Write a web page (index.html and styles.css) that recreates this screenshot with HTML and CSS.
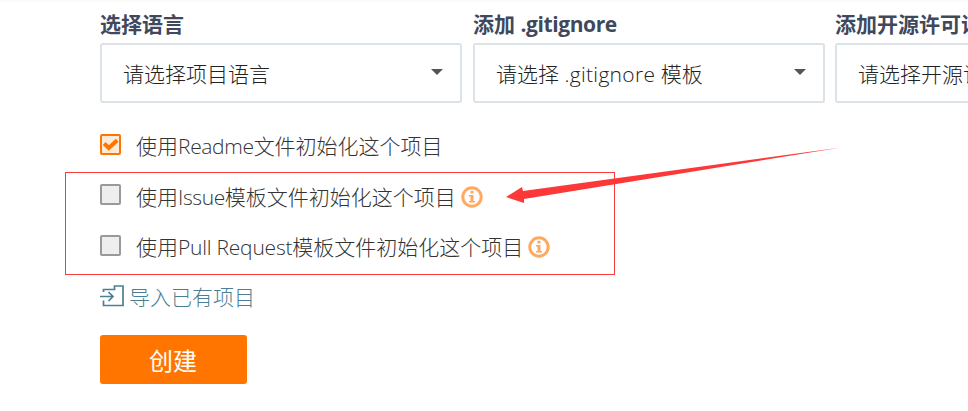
FILE: index.html
```
<!DOCTYPE html>
<html lang="zh-CN">
<head>
<meta charset="utf-8">
<title>新建项目</title>
<link rel="stylesheet" href="styles.css">
</head>
<body>
<form class="page">
  <div class="fields">
    <div class="field field-language">
      <div class="label">选择语言</div>
      <div class="select"><span>请选择项目语言</span><i class="caret"></i></div>
    </div>
    <div class="field field-ignore">
      <div class="label">添加 <span class="latin">.gitignore</span></div>
      <div class="select"><span>请选择 <span class="ignore">.gitignore</span> 模板</span><i class="caret"></i></div>
    </div>
    <div class="field field-license">
      <div class="label">添加开源许可证</div>
      <div class="select"><span>请选择开源许可证</span><i class="caret"></i></div>
    </div>
  </div>
  <div class="options">
    <div class="option">
      <span class="box checked"><svg viewBox="0 0 21 21"><path d="M4.200 9.500 8.800 14 17.200 6.200" fill="none" stroke="#ff7500" stroke-width="4"/></svg></span>
      <span class="text">使用<span class="readme">Readme</span>文件初始化这个项目</span>
    </div>
    <div class="option">
      <span class="box"></span>
      <span class="text">使用<span class="issue">Issue</span>模板文件初始化这个项目</span>
      <svg class="info" viewBox="0 0 22 22"><circle cx="11" cy="11" r="9.2"/><path d="M9.5 4.8h3v2.6h-3zM8 9h4.5v6H14v1.5H8V15h1.500v-4.500H8z"/></svg>
    </div>
    <div class="option">
      <span class="box"></span>
      <span class="text">使用<span class="pull">Pull Request</span>模板文件初始化这个项目</span>
      <svg class="info" viewBox="0 0 22 22"><circle cx="11" cy="11" r="9.2"/><path d="M9.5 4.8h3v2.6h-3zM8 9h4.5v6H14v1.5H8V15h1.500v-4.500H8z"/></svg>
    </div>
  </div>
  <a class="import">
    <svg viewBox="0 0 24 22"><path d="M3.500 7V4.500H14.500V1H23V20.500H3.500V15.500M0 11.500H13M8.500 7 13 11.500 8.500 16" fill="none" stroke="#4b7f93" stroke-width="1.700"/></svg>
    <span>导入已有项目</span>
  </a>
  <button type="button" class="create">创建</button>
</form>
<div class="highlight"></div>
<svg class="arrow" viewBox="0 0 336 60"><path d="M0 51 16 41 17 45 335 1.500 18 53 18 57z" fill="#fc3838"/></svg>
</body>
</html>
```

FILE: styles.css
```
* { box-sizing: border-box; }
body {
  margin: 0;
  height: 411px;
  overflow: hidden;
  position: relative;
  background: linear-gradient(#f8f8f8, #fff 3px);
  color: #333;
  font: 300 21px/30px "Open Sans", "Noto Sans CJK SC", sans-serif;
}
.page { padding: 9px 0 0 100px; overflow: hidden; }
.fields { display: flex; width: 1100px; }
.field-language { width: 362px; margin-right: 11px; }
.field-ignore { width: 352px; margin-right: 10px; }
.field-license { width: 352px; }
.label { height: 34px; font-weight: 700; color: #40485b; }
.label .latin { letter-spacing: -0.4px; }
.select {
  display: flex;
  align-items: center;
  justify-content: space-between;
  height: 60px;
  padding: 2px 17px 0 21px;
  border: 2px solid #dce3e8;
  border-radius: 3px;
  background: #fff;
  color: #222;
  white-space: nowrap;
}
.ignore { letter-spacing: 0.3px; }
.caret {
  margin-top: -5px;
  border: 6px solid transparent;
  border-top: 6px solid #555;
  border-bottom: 0;
}
.options { padding-top: 17px; }
.option { display: flex; align-items: center; height: 50.6px; white-space: nowrap; }
.text { padding-top: 1.6px; }
.readme { letter-spacing: -0.35px; }
.issue { letter-spacing: -0.4px; }
.pull { letter-spacing: -0.22px; }
.box {
  width: 21px;
  height: 21px;
  margin: 0 15px 2px 0;
  border: 2px solid #999;
  border-radius: 2px;
  background: #eee;
}
.checked { border-color: #ff7500; background: #ffead8; }
.checked svg { display: block; width: 21px; height: 21px; margin: -2px; }
.info { width: 22px; height: 22px; margin: 2px 0 0 5px; fill: #ffa860; }
.info circle { fill: none; stroke: #ffa860; stroke-width: 3; }
.import { display: flex; align-items: center; height: 30px; margin-top: 9.2px; color: #4b7f93; }
.import span { padding-top: 1.5px; }
.import svg { width: 24px; height: 22px; margin-right: 5px; }
.create {
  display: block;
  width: 147px;
  height: 49px;
  margin-top: 24px;
  padding: 0 1px 0 0;
  border: 0;
  border-radius: 3px;
  background: #ff7500;
  color: #fff;
  font: 400 24px/49px "Noto Sans CJK SC", sans-serif;
}
.highlight {
  position: absolute;
  left: 65px;
  top: 172px;
  width: 550px;
  height: 103px;
  border: 1px solid #fa3c3c;
}
.arrow { position: absolute; left: 506px; top: 146px; width: 336px; height: 60px; }
```
